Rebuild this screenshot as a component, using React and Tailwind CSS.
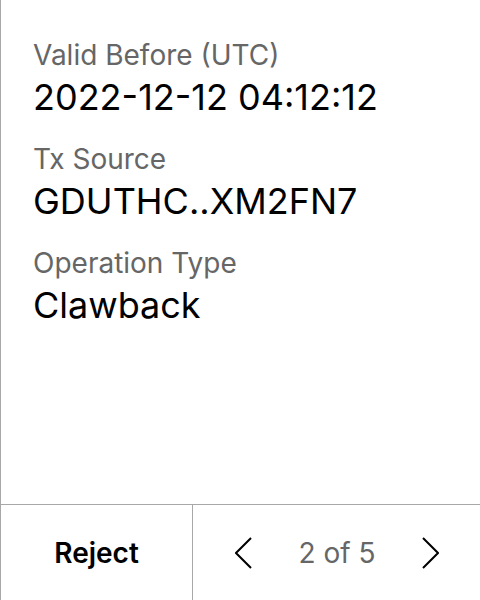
export default function App() {
  const fields = [
    { label: 'Valid Before (UTC)', value: '2022-12-12 04:12:12' },
    { label: 'Tx Source', value: 'GDUTHC..XM2FN7' },
    { label: 'Operation Type', value: 'Clawback' },
  ];
  return (
    <div className="w-[480px] h-[600px] flex flex-col bg-white border-l border-[#a8a8a8] font-['Inter',sans-serif]">
      <div className="flex-1 flex flex-col gap-6 pl-8 pt-[39px]">
        {fields.map((f) => (
          <div key={f.label} className="flex flex-col gap-1">
            <span className="text-[28px] leading-8 text-[#666666]">{f.label}</span>
            <span className="text-[36px] leading-[44px] text-black">{f.value}</span>
          </div>
        ))}
      </div>
      <div className="h-24 flex border-t border-[#a8a8a8]">
        <button className="w-[191px] flex items-center justify-center text-[28px] font-semibold text-black">
          Reject
        </button>
        <div className="flex-1 flex items-center justify-between border-l border-[#a8a8a8] pl-[42px] pr-[41px]">
          <svg width="18" height="32" viewBox="0 0 18 32" fill="none" stroke="black" strokeWidth="2">
            <path d="M16 1 1 16l15 15" />
          </svg>
          <span className="text-[28px] text-[#666666]">2 of 5</span>
          <svg width="18" height="32" viewBox="0 0 18 32" fill="none" stroke="black" strokeWidth="2">
            <path d="M2 1l15 15L2 31" />
          </svg>
        </div>
      </div>
    </div>
  );
}
